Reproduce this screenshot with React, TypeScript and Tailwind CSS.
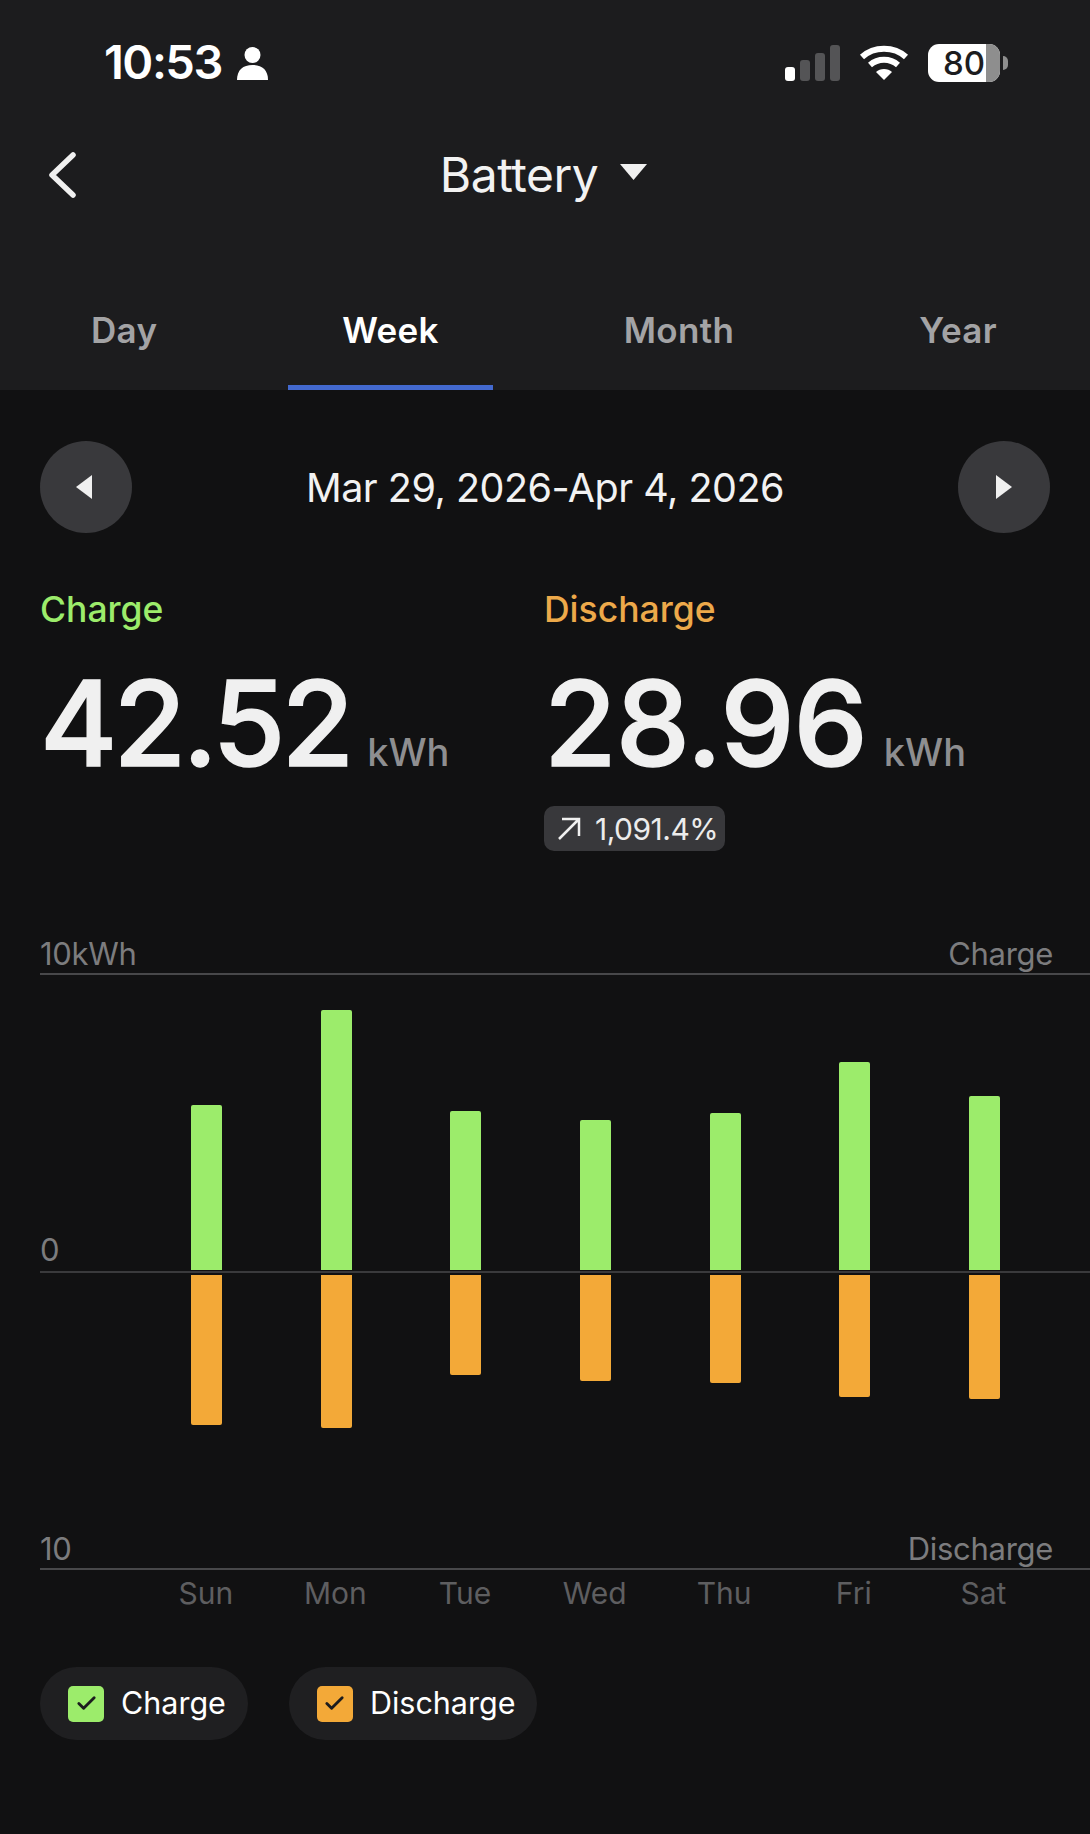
import React from "react";
import { Check } from "lucide-react";

const bars = [
  { day: "Sun", charge: 165, discharge: 150 },
  { day: "Mon", charge: 260, discharge: 153 },
  { day: "Tue", charge: 159, discharge: 100 },
  { day: "Wed", charge: 150, discharge: 106 },
  { day: "Thu", charge: 157, discharge: 108 },
  { day: "Fri", charge: 208, discharge: 122 },
  { day: "Sat", charge: 174, discharge: 124 },
];

const tabs = ["Day", "Week", "Month", "Year"];

const StatusBar = () => (
  <div className="flex h-[50px] items-center pl-[104px] pr-[82px]">
    <span className="mb-[4px] text-[47px] font-semibold leading-none tracking-[-1.5px] text-white">10:53</span>
    <svg className="ml-[14px]" width="33" height="34" viewBox="0 0 33 34" fill="white">
      <circle cx="16.5" cy="9" r="8" />
      <path d="M1 34c0-10 6-15 15.500-15S32 24 32 34z" />
    </svg>
    <div className="ml-auto flex items-center">
      <svg width="56" height="36" viewBox="0 0 56 36">
        <rect x="0" y="22" width="10" height="14" rx="3" fill="white" />
        <rect x="15" y="15" width="10" height="21" rx="3" fill="#545456" />
        <rect x="30" y="8" width="10" height="28" rx="3" fill="#545456" />
        <rect x="45" y="0" width="10" height="36" rx="3" fill="#545456" />
      </svg>
      <svg className="ml-[18px]" width="50" height="38" viewBox="0 0 50 38" fill="none" stroke="white" strokeWidth="6">
        <path d="M3 13c12-11 32-11 44 0" />
        <path d="M11 21c8-7 20-7 28 0" />
        <path d="M25 36l-8-8c4-4 12-4 16 0z" fill="white" stroke="none" />
      </svg>
      <div className="ml-[19px] flex items-center">
        <div className="relative flex h-[38px] w-[72px] items-center overflow-hidden rounded-[11px] bg-white pl-[15px]">
          <span className="text-[33px] font-medium leading-none text-[#1c1c1e]">80</span>
          <div className="absolute bottom-0 right-0 top-0 w-[14px] bg-[#8e8e8e]" />
        </div>
        <div className="ml-[3px] h-[14px] w-[5px] rounded-r-full bg-[#8e8e8e]" />
      </div>
    </div>
  </div>
);

const Legend = ({ label, color }: { label: string; color: string }) => (
  <div className="flex h-[73px] items-center gap-[17px] rounded-full bg-[#1f1f21] pl-[28px] pr-[22px]">
    <div className={`flex h-[36px] w-[36px] items-center justify-center rounded-[5px] ${color}`}>
      <Check size={23} strokeWidth={3} className="text-[#1c1c1e]" />
    </div>
    <span className="text-[30.5px] leading-none text-white">{label}</span>
  </div>
);

const Stat = ({
  label,
  value,
  color,
  width,
  spacing,
}: {
  label: string;
  value: string;
  color: string;
  width: string;
  spacing: string;
}) => (
  <div className={width}>
    <div className={`text-[35.5px] font-medium leading-[40px] ${color}`}>{label}</div>
    <div className="mt-[34px] flex items-baseline">
      <span className={`text-[118px] font-medium leading-[118px] text-[#f0f0f0] [-webkit-text-stroke:1.5px_#f0f0f0] ${spacing}`}>{value}</span>
      <span className="ml-[17px] text-[38px] font-medium leading-none text-[#8e8e90]">kWh</span>
    </div>
  </div>
);

export default function App() {
  return (
    <div className="h-[1834px] w-[1090px] overflow-hidden bg-[#111112] font-['Inter',sans-serif]">
      <div className="flex h-[390px] flex-col bg-[#1c1c1e] pt-[38px]">
        <StatusBar />

        <div className="relative mt-[46px] flex h-[80px] items-center justify-center">
          <svg className="absolute left-[47px] top-[18px]" width="30" height="46" viewBox="0 0 30 46" fill="none" stroke="#f0f0f0" strokeWidth="5.500" strokeLinecap="round" strokeLinejoin="round">
            <path d="M26 3L5 23l21 20" />
          </svg>
          <span className="ml-[-3px] mt-[2px] text-[48px] leading-none tracking-[-0.5px] text-[#f2f2f2]">Battery</span>
          <svg className="mb-[4px] ml-[22px]" width="27" height="16" viewBox="0 0 27 16" fill="#f0f0f0">
            <path d="M0 0h27L13.500 16z" />
          </svg>
        </div>

        <div className="mt-auto flex gap-[77px] pl-[37px]">
          {tabs.map((tab) => (
            <div
              key={tab}
              className={
                tab === "Week"
                  ? "flex h-[77px] items-center border-b-[5px] border-[#4369cf] px-[54px] pb-[37px] text-[35px] font-semibold tracking-[0.3px] text-white"
                  : "flex h-[77px] items-center border-b-[5px] border-transparent px-[54px] pb-[37px] text-[35px] font-semibold tracking-[0.3px] text-[#a3a3a5]"
              }
            >
              {tab}
            </div>
          ))}
        </div>
      </div>

      <div className="mt-[51px] flex items-center justify-between px-[40px]">
        <button className="flex h-[92px] w-[92px] items-center justify-center rounded-full bg-[#39393c]">
          <svg className="mr-[4px]" width="16" height="24" viewBox="0 0 16 24" fill="#f0f0f0">
            <path d="M16 0v24L0 12z" />
          </svg>
        </button>
        <span className="mt-[4px] text-[39.5px] leading-none tracking-[-0.5px] text-[#f2f2f2]">Mar 29, 2026-Apr 4, 2026</span>
        <button className="flex h-[92px] w-[92px] items-center justify-center rounded-full bg-[#39393c]">
          <svg width="16" height="24" viewBox="0 0 16 24" fill="#f0f0f0">
            <path d="M0 0v24l16-12z" />
          </svg>
        </button>
      </div>

      <div className="mt-[57px] flex pl-[40px]">
        <Stat label="Charge" value="42.52" color="text-[#9cec6b]" width="w-[504px]" spacing="tracking-[-4px]" />
        <div>
          <Stat label="Discharge" value="28.96" color="text-[#eda94a]" width="w-[504px]" spacing="tracking-[-1px]" />
          <div className="mt-[24px] flex h-[45px] w-[181px] items-center gap-[13px] rounded-[10px] bg-[#38383b] pl-[12px]">
            <svg width="26" height="26" viewBox="0 0 26 26" fill="none" stroke="#f0f0f0" strokeWidth="2.500">
              <path d="M3 23L23 3M6 3h17v17" />
            </svg>
            <span className="text-[30px] leading-none tracking-[-0.5px] text-[#ececec]">1,091.4%</span>
          </div>
        </div>
      </div>

      <div className="mt-[82px] pl-[40px]">
        <div className="flex h-[42px] items-start justify-between border-b-2 border-[#48484a] pr-[37px] pt-[5px] text-[31px] leading-none tracking-[-0.3px] text-[#7c7c7e]">
          <span>10kWh</span>
          <span>Charge</span>
        </div>

        <div className="relative flex h-[298px] items-end border-b-2 border-[#3a3a3c] pb-[1px] pl-[102px]">
          <span className="absolute bottom-[2px] left-0 text-[31px] leading-[38px] text-[#7c7c7e]">0</span>
          {bars.map((bar) => (
            <div key={bar.day} className="flex w-[129.6px] justify-center">
              <div className="w-[31px] rounded-t-[2px] bg-[#9cec6b]" style={{ height: bar.charge }} />
            </div>
          ))}
        </div>

        <div className="relative flex h-[297px] items-start border-b-2 border-[#48484a] pl-[102px] pt-[2px]">
          <div className="absolute bottom-0 left-0 right-[37px] flex justify-between text-[31px] leading-[38px] tracking-[-0.3px] text-[#7c7c7e]">
            <span>10</span>
            <span>Discharge</span>
          </div>
          {bars.map((bar) => (
            <div key={bar.day} className="flex w-[129.6px] justify-center">
              <div className="w-[31px] rounded-b-[2px] bg-[#f3a938]" style={{ height: bar.discharge }} />
            </div>
          ))}
        </div>

        <div className="mt-[3px] flex pl-[101px]">
          {bars.map((bar) => (
            <div key={bar.day} className="w-[129.6px] text-center text-[30px] leading-[40px] text-[#5e5e60]">
              {bar.day}
            </div>
          ))}
        </div>

        <div className="mt-[54px] flex gap-[41px]">
          <Legend label="Charge" color="bg-[#9cec6b]" />
          <Legend label="Discharge" color="bg-[#f3a938]" />
        </div>
      </div>
    </div>
  );
}
